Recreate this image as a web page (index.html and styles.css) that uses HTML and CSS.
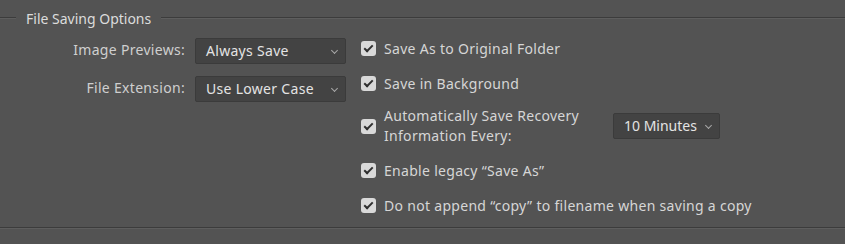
FILE: index.html
```html
<!DOCTYPE html>
<html lang="en">
<head>
    <meta charset="UTF-8">
    <title>File Handling</title>
    <link rel="stylesheet" href="styles.css">
</head>
<body>
    <section class="group">
        <div class="group-title">
            <span class="rule rule-short"></span>
            <span class="group-name">File Saving Options</span>
            <span class="rule"></span>
        </div>

        <div class="group-body">
            <div class="left-col">
                <div class="field">
                    <label class="field-label">Image Previews:</label>
                    <div class="dropdown">Always Save<span class="chevron"></span></div>
                </div>
                <div class="field">
                    <label class="field-label">File Extension:</label>
                    <div class="dropdown">Use Lower Case<span class="chevron"></span></div>
                </div>
            </div>

            <div class="right-col">
                <div class="check-row">
                    <span class="checkbox"></span>
                    <span class="check-text">Save As to Original Folder</span>
                </div>
                <div class="check-row">
                    <span class="checkbox"></span>
                    <span class="check-text">Save in Background</span>
                </div>
                <div class="check-row check-row-tall">
                    <span class="checkbox"></span>
                    <span class="check-text check-text-wrap">Automatically Save Recovery Information Every:</span>
                    <div class="dropdown dropdown-small">10 Minutes<span class="chevron"></span></div>
                </div>
                <div class="check-row">
                    <span class="checkbox"></span>
                    <span class="check-text">Enable legacy “Save As”</span>
                </div>
                <div class="check-row">
                    <span class="checkbox"></span>
                    <span class="check-text">Do not append “copy” to filename when saving a copy</span>
                </div>
            </div>
        </div>
    </section>

    <section class="group">
        <div class="group-title">
            <span class="rule rule-short"></span>
            <span class="group-name">File Compatibility</span>
            <span class="rule"></span>
        </div>
    </section>
</body>
</html>
```

FILE: styles.css
```css
:root {
    --bg: #535353;
    --text: #d6d6d6;
    --field: #434343;
    --field-border: #3b3b3b;
    --rule-dark: #3c3c3c;
    --rule-light: #5e5e5e;
}

html, body {
    height: 100%;
    overflow: hidden;
}

body {
    margin: 0;
    background: var(--bg);
    color: var(--text);
    font-family: 'Noto Sans', sans-serif;
    font-size: 14px;
    letter-spacing: 0.3px;
}

.group-title {
    display: flex;
    align-items: center;
    height: 20px;
    padding-top: 8px;
}

.rule {
    flex: 1;
    height: 0;
    border-top: 1px solid var(--rule-dark);
    border-bottom: 1px solid var(--rule-light);
}

.rule-short {
    flex: 0 0 16px;
}

.group-name {
    padding: 0 10px;
    font-size: 14px;
    letter-spacing: 0;
    color: #dcdcdc;
}

.group-body {
    display: flex;
    border-bottom: 1px solid var(--rule-dark);
    box-shadow: 0 1px 0 var(--rule-light);
    padding-bottom: 9px;
    margin-bottom: 12px;
}

/* левая колонка с выпадающими списками */
.left-col {
    width: 361px;
    padding-top: 10px;
    display: flex;
    flex-direction: column;
    gap: 12px;
}

.field {
    display: flex;
    align-items: center;
}

.field-label {
    width: 195px;
    text-align: right;
    padding-right: 10px;
    box-sizing: border-box;
    color: #cfcfcf;
    position: relative;
    top: -2px;
}

.dropdown {
    position: relative;
    width: 151px;
    height: 26px;
    box-sizing: border-box;
    padding: 0 10px;
    line-height: 24px;
    background: var(--field);
    border: 1px solid var(--field-border);
    border-radius: 2px;
    color: #e4e4e4;
}

.chevron {
    position: absolute;
    right: 8px;
    top: 9px;
    width: 4px;
    height: 4px;
    border-right: 1px solid #a8a8a8;
    border-bottom: 1px solid #a8a8a8;
    transform: rotate(45deg);
}

.dropdown-small {
    width: 107px;
    margin-left: auto;
    margin-right: 125px;
    letter-spacing: 0;
}

/* правая колонка с флажками */
.right-col {
    flex: 1;
    padding-top: 7px;
    display: flex;
    flex-direction: column;
    gap: 9px;
}

.check-row {
    display: flex;
    align-items: center;
    min-height: 26px;
}

.check-row-tall {
    margin-top: 1px;
    margin-bottom: 2px;
}

.checkbox {
    position: relative;
    flex: 0 0 15px;
    height: 15px;
    background: #d9d9d9;
    border-radius: 3px;
    margin-right: 8px;
}

.checkbox::after {
    content: '';
    position: absolute;
    left: 5px;
    top: 2px;
    width: 3px;
    height: 7px;
    border-right: 2px solid #2f2f2f;
    border-bottom: 2px solid #2f2f2f;
    transform: rotate(45deg);
}

.check-text {
    white-space: nowrap;
}

.check-text-wrap {
    white-space: normal;
    width: 215px;
    line-height: 20px;
}
```
